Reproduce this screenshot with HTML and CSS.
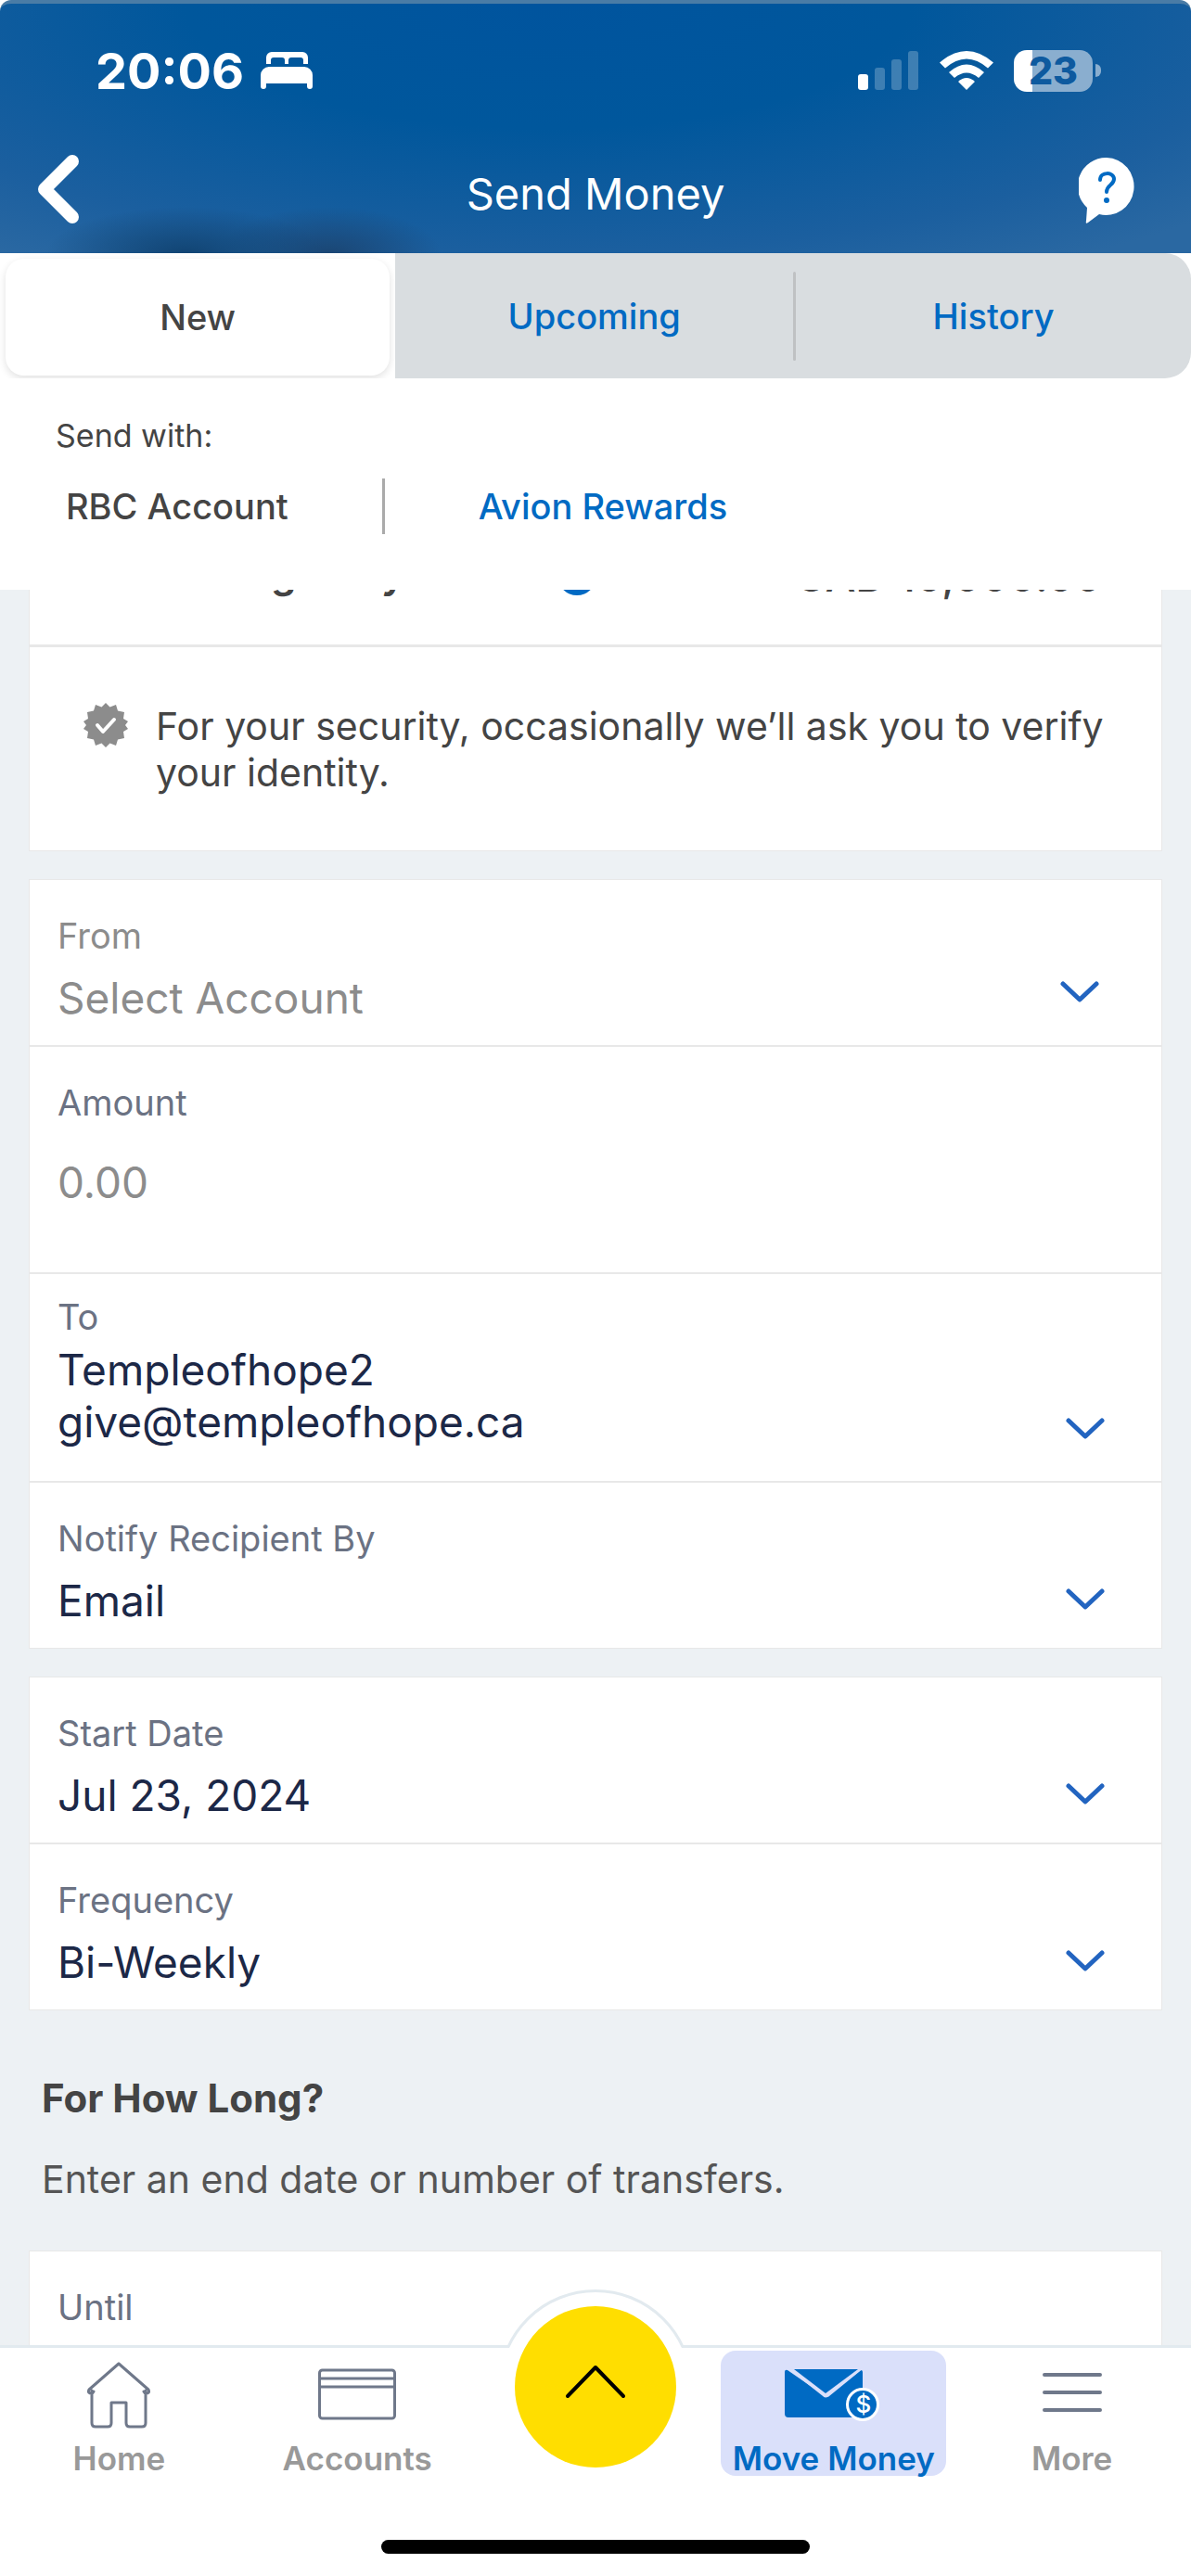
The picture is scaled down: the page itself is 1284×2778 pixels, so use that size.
FILE: index.html
```html
<!DOCTYPE html>
<html lang="en">
<head>
<meta charset="utf-8">
<meta name="viewport" content="width=device-width, initial-scale=1">
<title>Send Money</title>
<link rel="stylesheet" href="styles.css">
</head>
<body>
<svg class="sprite" aria-hidden="true">
  <symbol id="chevron" viewBox="0 0 42 24"><path d="M3 3l18 17L39 3" fill="none" stroke="currentColor" stroke-width="5" stroke-linecap="round" stroke-linejoin="round"/></symbol>
</svg>
<header class="header">
  <div class="status">
    <span class="clock">20:06</span>
    <svg class="bed" width="56" height="40" viewBox="0 0 56 40" fill="#fff"><path d="M6 13V6a6 6 0 0 1 6-6h33a6 6 0 0 1 6 6v7h-5V9a3 3 0 0 0-3-3H33a3 3 0 0 0-3 3v4h-4V9a3 3 0 0 0-3-3H14a3 3 0 0 0-3 3v4z"/><path d="M0 25a9 9 0 0 1 9-9h38a9 9 0 0 1 9 9v12a3 3 0 0 1-6 0v-3H6v3a3 3 0 0 1-6 0z"/></svg>
    <svg class="signal" width="66" height="42" viewBox="0 0 66 42" fill="#fff"><rect y="25" width="11" height="17" rx="3"/><g opacity=".23"><rect x="18" y="18" width="11" height="24" rx="3"/><rect x="36" y="9" width="11" height="33" rx="3"/><rect x="54" width="11" height="42" rx="3"/></g></svg>
    <svg class="wifi" width="58" height="42" viewBox="0 0 58 42" fill="#fff"><path d="M29 42l-9-9q9-8 18 0z"/><path d="M10 23q19-17 38 0l-6 6q-13-11-26 0z"/><path d="M0 12.500q29-25 58 0l-6 6q-23-20-46 0z"/></svg>
    <span class="battery"><span class="battery-level">23</span></span>
  </div>
  <div class="titlebar">
    <button class="icon-button" type="button" aria-label="Back"><svg width="44" height="74" viewBox="0 0 44 74"><path d="M37 7L7 37l30 30" fill="none" stroke="#fff" stroke-width="14" stroke-linecap="round" stroke-linejoin="round"/></svg></button>
    <h1 class="title">Send Money</h1>
    <button class="icon-button icon-button-end" type="button" aria-label="Help"><svg width="60" height="72" viewBox="0 0 60 72"><path d="M30 0a30 31 0 1 1-8 61L10 70q-3 2-2-2l1-14A31 31 0 0 1 30 0z" fill="#fff"/><path d="M23 24c0-9 15-9 15-1 0 7-8 6-8 14" fill="none" stroke="#006ac3" stroke-width="4" stroke-linecap="round"/><circle cx="30" cy="46" r="3" fill="#006ac3"/></svg></button>
  </div>
</header>
<nav class="tabs" aria-label="Transfers">
  <div class="tab tab-current"><button class="tab-button" type="button">New</button></div>
  <div class="tab"><button class="tab-button" type="button">Upcoming</button></div>
  <div class="tab"><button class="tab-button" type="button">History</button></div>
</nav>
<section class="source">
  <p class="source-title">Send with:</p>
  <div class="source-options">
    <button class="source-option source-current" type="button">RBC Account</button>
    <button class="source-option" type="button">Avion Rewards</button>
  </div>
</section>
<main class="content">
  <form class="form">
    <section class="card card-first">
      <div class="limit">
        <span class="limit-label">Remaining Daily Limit</span>
        <span class="info"></span>
        <span class="limit-value">CAD 10,000.00</span>
      </div>
      <div class="notice">
        <svg class="badge" width="48" height="48" viewBox="0 0 48 48"><path d="M24 0l4.500 4.500L35 2l2 6.500 7 1.500-1 7 5 3-3 4 3 4-5 3 1 7-7 1.500-2 6.500-6.500-2.500L24 48l-4.500-4.500L13 46l-2-6.500L4 38l1-7-5-3 3-4-3-4 5-3-1-7 7-1.500L13 2l6.500 2.500z" fill="#8c8c8c"/><path d="M15 24l6 7 12-13" fill="none" stroke="#fff" stroke-width="4" stroke-linecap="round" stroke-linejoin="round"/></svg>
        <p class="notice-text">For your security, occasionally we’ll ask you to verify your identity.</p>
      </div>
    </section>
    <section class="card">
      <div class="field field-from">
        <div class="field-body">
          <label class="label label-muted" for="from">From</label>
          <select class="value value-empty" id="from"><option>Select Account</option></select>
        </div>
        <svg class="chevron"><use href="#chevron"/></svg>
      </div>
      <div class="field field-amount">
        <div class="field-body">
          <label class="label" for="amount">Amount</label>
          <input class="value" id="amount" type="text" inputmode="decimal" placeholder="0.00">
        </div>
      </div>
      <div class="field field-to">
        <div class="field-body">
          <label class="label" for="to">To</label>
          <button class="value" id="to" type="button">Templeofhope2<br>give@templeofhope.ca</button>
        </div>
        <svg class="chevron"><use href="#chevron"/></svg>
      </div>
      <div class="field">
        <div class="field-body">
          <label class="label" for="notify">Notify Recipient By</label>
          <select class="value" id="notify"><option>Email</option></select>
        </div>
        <svg class="chevron"><use href="#chevron"/></svg>
      </div>
    </section>
    <section class="card">
      <div class="field">
        <div class="field-body">
          <label class="label" for="start">Start Date</label>
          <button class="value" id="start" type="button">Jul 23, 2024</button>
        </div>
        <svg class="chevron"><use href="#chevron"/></svg>
      </div>
      <div class="field">
        <div class="field-body">
          <label class="label" for="frequency">Frequency</label>
          <select class="value" id="frequency"><option>Bi-Weekly</option></select>
        </div>
        <svg class="chevron"><use href="#chevron"/></svg>
      </div>
    </section>
    <div class="duration">
      <h2 class="duration-title">For How Long?</h2>
      <p class="duration-text">Enter an end date or number of transfers.</p>
    </div>
    <section class="card">
      <div class="field">
        <div class="field-body">
          <label class="label" for="until">Until</label>
          <input class="value" id="until" type="text">
        </div>
      </div>
    </section>
  </form>
</main>
<footer class="dock">
  <nav class="dock-nav" aria-label="Main">
    <a class="dock-item" href="#home">
      <svg class="dock-icon" width="70" height="72" viewBox="0 0 70 72" fill="none" stroke="#6f788a" stroke-width="3" stroke-linejoin="round" stroke-linecap="round"><path d="M6 31v35q0 4 4 4h13q4 0 4-4V44h16v22q0 4 4 4h13q4 0 4-4V31M35 2L3 30q-2 4 3 4 1 0 2-2M35 2l32 28q2 4-3 4-1 0-2-2"/></svg>
      Home
    </a>
    <a class="dock-item" href="#accounts">
      <svg class="dock-icon" width="84" height="72" viewBox="0 0 84 72" fill="none" stroke="#6f788a" stroke-width="3"><rect x="1.500" y="9" width="81" height="52" rx="3"/><path d="M2 18h80M2 27h80"/></svg>
      Accounts
    </a>
    <div class="dock-center">
      <button class="launch" type="button" aria-label="Open menu"><svg width="66" height="40" viewBox="0 0 66 40"><path d="M3 36L33 5l30 31" fill="none" stroke="#000" stroke-width="4" stroke-linecap="round" stroke-linejoin="round"/></svg></button>
    </div>
    <a class="dock-item dock-current" href="#move">
      <svg class="dock-icon dock-mail" width="108" height="72" viewBox="0 0 108 72"><path d="M7 9l42 29 37-29q2 0 2 2v45q0 4-4 4H8q-4 0-4-4V11q0-3 3-2z" fill="#006ac3"/><path d="M9 6l38 30q1 1 3 0L87 6" fill="none" stroke="#dae0fa" stroke-width="4"/><path d="M14 8h69L48 34z" fill="#006ac3"/><circle cx="88" cy="46" r="16.500" fill="#006ac3" stroke="#fff" stroke-width="3"/><text class="coin" x="89" y="55">$</text></svg>
      Move Money
    </a>
    <a class="dock-item" href="#more">
      <svg class="dock-icon" width="66" height="72" viewBox="0 0 66 72" fill="none" stroke="#6f788a" stroke-width="4" stroke-linecap="round"><path d="M3 14h60M3 33h60M3 52h60"/></svg>
      More
    </a>
  </nav>
  <div class="home-indicator"></div>
</footer>
</body>
</html>
```
FILE: styles.css
```css
*,
*::before,
*::after {
  box-sizing: border-box;
}

body {
  margin: 0;
  height: 100vh;
  display: flex;
  flex-direction: column;
  background: #fff;
  color: #444;
  font-family: Inter, "Liberation Sans", sans-serif;
  font-size: 41px;
  overflow: hidden;
}

h1, h2, p {
  margin: 0;
}

button, input, select {
  margin: 0;
  padding: 0;
  border: 0;
  background: none;
  font: inherit;
  color: inherit;
  text-align: left;
  appearance: none;
}

.sprite {
  display: none;
}

/* Header */

.header {
  flex: none;
  padding: 4px 0 1px;
  border-top: 4px solid #4a7ca6;
  border-radius: 12px 12px 0 0;
  color: #fff;
  background:
    radial-gradient(ellipse 150px 50px at 200px 100%, #114473 0%, #11447300 100%),
    radial-gradient(ellipse 120px 50px at 355px 100%, #1a4674 0%, #1a467400 100%),
    radial-gradient(ellipse 76% 125% at 46% 0, #00549e 0%, #00579c 40%, #1b5f9f 80%, #2a68a2 100%);
}

.status {
  display: flex;
  align-items: center;
  height: 136px;
  padding: 0 97px 0 103px;
}

.clock {
  font-size: 54px;
  font-weight: 700;
}

.bed {
  margin-left: 18px;
}

.signal {
  margin-left: auto;
}

.wifi {
  margin: 0 22px;
}

.battery {
  display: flex;
  align-items: center;
}

.battery::after {
  content: "";
  width: 6px;
  height: 14px;
  margin-left: 3px;
  border-radius: 0 7px 7px 0;
  background: #8aaecf;
}

.battery-level {
  width: 85px;
  height: 45px;
  border-radius: 14px;
  background: linear-gradient(to right, #fff 20px, #8aaecf 20px);
  color: #0e5a9f;
  font-size: 41px;
  font-weight: 800;
  line-height: 45px;
  text-align: center;
}

.titlebar {
  display: grid;
  grid-template-columns: 1fr auto 1fr;
  align-items: center;
  height: 128px;
  padding: 0 61px 0 41px;
}

.icon-button {
  display: flex;
  justify-self: start;
  padding-bottom: 8px;
}

.icon-button-end {
  justify-self: end;
  padding-bottom: 5px;
}

.title {
  margin-left: 20px;
  font-size: 47px;
  font-weight: 400;
}

/* Tabs */

.tabs {
  flex: none;
  display: grid;
  grid-template-columns: 33.2% 1fr 1fr;
  height: 135px;
  border-radius: 0 28px 28px 0;
  background: #d9dde0;
}

.tab {
  display: flex;
  align-items: center;
  color: #006ac3;
}

.tab-button {
  flex: 1;
  align-self: stretch;
  font-size: 38px;
  font-weight: 500;
  text-align: center;
}

.tab-current {
  padding: 6px 6px 3px 6px;
  background: #fff;
  color: #444;
  overflow: hidden;
}

.tab-current .tab-button {
  border-radius: 20px;
  box-shadow: 0 3px 8px #0000001f;
}

.tab + .tab + .tab::before {
  content: "";
  width: 3px;
  height: 96px;
  border-radius: 2px;
  background: #bfc1c3;
}

/* Funding source */

.source {
  flex: none;
  height: 228px;
  padding: 40px 60px 0;
}

.source-title {
  font-size: 34px;
  font-weight: 400;
  line-height: 44px;
}

.source-options {
  display: flex;
  margin-top: 24px;
}

.source-option {
  height: 60px;
  padding: 0 101px;
  color: #006ac3;
  font-size: 38px;
  font-weight: 500;
}

.source-current {
  padding-left: 11px;
  border-right: 3px solid #aaa;
  color: #444;
}

/* Scrolling form */

.content {
  flex: 1;
  min-height: 0;
  overflow: hidden;
  background: #edf1f4;
}

.form {
  padding: 0 31px;
}

.card {
  margin-top: 30px;
  border: 1px solid #e8e8e8;
  background: #fff;
}

.card-first {
  margin-top: -91px;
}

.limit {
  display: flex;
  align-items: flex-end;
  padding: 48px 64px 53px;
  border-bottom: 3px solid #e8e8e8;
  line-height: 48px;
}

.limit-label {
  font-size: 44px;
  font-weight: 600;
}

.info {
  width: 42px;
  height: 42px;
  margin-left: 50px;
  border-radius: 50%;
  background: #006ac3;
}

.limit-value {
  margin-left: auto;
  font-size: 46px;
  font-weight: 500;
  line-height: 42px;
}

.notice {
  display: flex;
  gap: 30px;
  padding: 60px 58px 59px;
  line-height: 50px;
}

.badge {
  flex: none;
}

.notice-text {
  margin-right: -12px;
}

.field {
  display: flex;
  align-items: flex-end;
  padding: 36px 61px 23px 30px;
}

.field + .field {
  border-top: 2px solid #e8e8e8;
}

.field-body {
  flex: 1;
  display: flex;
  flex-direction: column;
  gap: 15px;
}

.label {
  color: #6b7283;
  font-size: 38px;
  font-weight: 400;
  line-height: 48px;
}

.label-muted {
  color: #8c8c8c;
}

.value {
  width: 100%;
  min-height: 56px;
  color: #1c2847;
  font-size: 46px;
  font-weight: 400;
  line-height: 56px;
}

.value-empty,
.value::placeholder {
  color: #8c8c8c;
  opacity: 1;
}

.chevron {
  flex: none;
  width: 42px;
  height: 24px;
  margin-bottom: 17px;
  color: #2264c0;
}

.field-from {
  padding-right: 67px;
}

.field-from .chevron {
  margin-bottom: 22px;
}

.field-amount {
  padding-bottom: 69px;
}

.field-amount .field-body {
  gap: 34px;
}

.field-to {
  padding-top: 22px;
  padding-bottom: 36px;
}

.field-to .field-body {
  gap: 5px;
}

.field-to .chevron {
  margin-bottom: 8px;
}

.duration {
  padding: 71px 14px 23px;
  line-height: 48px;
}

.duration-title {
  margin-bottom: 39px;
  font-size: 42px;
  font-weight: 700;
}

.duration-text {
  color: #555;
}

/* Bottom navigation */

.dock {
  position: relative;
  flex: none;
  padding-bottom: 24px;
  border-top: 3px solid #e2eaef;
  background: #fff;
}

.dock-nav {
  display: grid;
  grid-template-columns: repeat(5, 1fr);
  padding-top: 3px;
}

.dock-item {
  display: flex;
  flex-direction: column;
  align-items: center;
  gap: 10px;
  height: 135px;
  margin: 0 7px;
  padding-top: 12px;
  border-radius: 16px;
  color: #999;
  font-size: 35px;
  font-weight: 600;
  line-height: 44px;
  text-decoration: none;
  white-space: nowrap;
}

.dock-icon {
  flex: none;
}

.dock-current {
  background: #dae0fa;
  color: #006ac3;
}

.dock-mail {
  margin-right: 6px;
}

.coin {
  fill: #fff;
  font-size: 26px;
  font-weight: 500;
  text-anchor: middle;
}

.dock-center {
  display: flex;
  justify-content: center;
}

/* White disc with a hairline that rises out of the dock's top edge */
.dock-center::before {
  content: "";
  position: absolute;
  top: -63px;
  width: 210px;
  height: 210px;
  border: 3px solid #e2eaef;
  border-radius: 50%;
  background: #fff;
  clip-path: inset(0 0 147px);
}

.launch {
  position: absolute;
  z-index: 1;
  top: -45px;
  display: flex;
  justify-content: center;
  width: 174px;
  height: 174px;
  padding-top: 61px;
  border-radius: 50%;
  background: #ffde00;
}

.home-indicator {
  width: 36%;
  height: 15px;
  margin: 69px auto 0;
  border-radius: 8px;
  background: #000;
}
```
